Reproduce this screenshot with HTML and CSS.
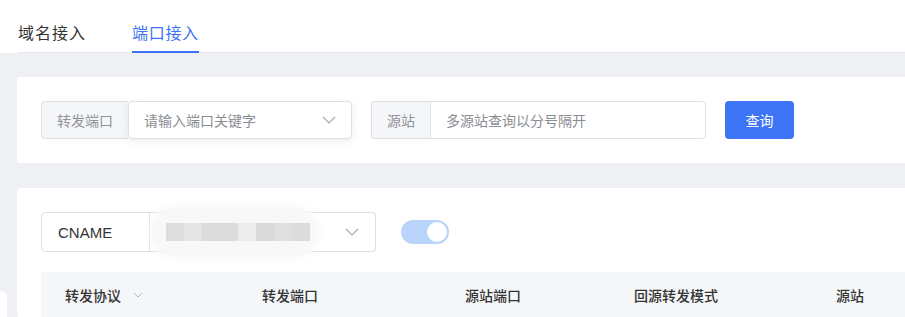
FILE: index.html
```html
<!doctype html>
<html lang="zh-CN">
  <head>
    <meta charset="UTF-8" />
    <title>端口接入</title>
    <link rel="stylesheet" href="styles.css">
  </head>
  <body>
    <div class="tabs">
      <span class="tab">域名接入</span>
      <span class="tab active">端口接入</span>
    </div>

    <div class="page">
      <div class="card search-card">
        <div class="group">
          <span class="addon addon-port">转发端口</span>
          <div class="select select-port">
            <span class="placeholder">请输入端口关键字</span>
            <svg class="arrow" width="14" height="8" viewBox="0 0 14 8"><path d="M1 1l6 6 6-6" fill="none" stroke="#a8abb2" stroke-width="1.2"/></svg>
          </div>
        </div>
        <div class="group group-origin">
          <span class="addon addon-origin">源站</span>
          <div class="input-origin">
            <span class="placeholder">多源站查询以分号隔开</span>
          </div>
        </div>
        <button class="btn">查询</button>
      </div>

      <div class="card list-card">
        <div class="toolbar">
          <div class="group group-cname">
            <span class="addon addon-cname">CNAME</span>
            <div class="select select-cname">
              <span class="blur">
                <i class="px p1"></i><i class="px p2"></i><i class="px p3"></i><i class="px p4"></i><i class="px p5"></i><i class="px p6"></i><i class="px p7"></i>
              </span>
              <svg class="arrow" width="14" height="8" viewBox="0 0 14 8"><path d="M1 1l6 6 6-6" fill="none" stroke="#a8abb2" stroke-width="1.2"/></svg>
            </div>
          </div>
          <span class="switch"><span class="knob"></span></span>
        </div>

        <div class="thead">
          <div class="th">转发协议
            <svg class="sort" width="10" height="6" viewBox="0 0 10 6"><path d="M1 1l4 4 4-4" fill="none" stroke="#b4b7bd" stroke-width="1"/></svg>
          </div>
          <div class="th">转发端口</div>
          <div class="th">源站端口</div>
          <div class="th">回源转发模式</div>
          <div class="th">源站</div>
        </div>
      </div>
    </div>

    <div class="side-tip"></div>
  </body>
</html>
```

FILE: styles.css
```css
body {
  margin: 0;
  font-family: "Noto Sans CJK SC", "Noto Sans", sans-serif;
  background: #eef0f4;
  color: #333;
  overflow: hidden;
  height: 317px;
}
.tabs {
  background: #fff;
  height: 53px;
  padding-left: 18px;
  display: flex;
  gap: 46px;
  position: relative;
}
.tabs::after {
  content: "";
  position: absolute;
  left: 18px;
  right: 0;
  bottom: 0;
  height: 1px;
  background: #e4e7ed;
}
.tab {
  font-size: 16px;
  line-height: 22px;
  padding-top: 21px;
  color: #333;
  height: 32px;
  box-sizing: border-box;
  letter-spacing: 1px;
}
.tab.active {
  color: #3d74f5;
  height: 53px;
  border-bottom: 2px solid #3d74f5;
  position: relative;
  z-index: 1;
  margin-bottom: -1px;
  letter-spacing: 0.7px;
}
.page {
  padding: 24px 0 0 17px;
}
.card {
  background: #fff;
  border-radius: 4px 0 0 4px;
  padding: 24px;
}
.search-card {
  display: flex;
  align-items: center;
  height: 38px;
  margin-bottom: 25px;
}
.group {
  display: flex;
  height: 38px;
  font-size: 14px;
}
.addon {
  background: #f5f6f8;
  color: #909399;
  border: 1px solid #dcdfe6;
  border-right: none;
  border-radius: 4px 0 0 4px;
  display: flex;
  align-items: center;
  justify-content: center;
  box-sizing: border-box;
}
.addon-port {
  width: 87px;
}
.addon-origin {
  width: 59px;
}
.select {
  display: flex;
  align-items: center;
  justify-content: space-between;
  border: 1px solid #dcdfe6;
  border-radius: 4px;
  box-sizing: border-box;
  background: #fff;
}
.select-port {
  width: 224px;
  padding: 0 15px;
  box-shadow: 0 2px 8px rgba(0, 0, 0, 0.08);
}
.placeholder {
  color: #8a8d93;
}
.group-origin {
  margin-left: 19px;
}
.input-origin {
  width: 276px;
  border: 1px solid #dcdfe6;
  border-radius: 0 4px 4px 0;
  box-sizing: border-box;
  display: flex;
  align-items: center;
  padding: 0 15px;
}
.btn {
  margin-left: 19px;
  width: 69px;
  height: 38px;
  border: none;
  border-radius: 4px;
  background: #3d74f5;
  color: #fff;
  font-family: inherit;
  font-size: 14px;
}
.list-card {
  padding-bottom: 0;
  padding-right: 0;
}
.toolbar {
  display: flex;
  align-items: center;
  gap: 25px;
  margin-bottom: 20px;
}
.group-cname {
  height: 40px;
}
.addon-cname {
  width: 109px;
  background: #fff;
  color: #333;
  justify-content: flex-start;
  padding-left: 16px;
  border-right: 1px solid #dcdfe6;
  font-family: "Liberation Sans", Arial, sans-serif;
  font-size: 15px;
}
.select-cname {
  width: 226px;
  border-left: none;
  border-radius: 0 4px 4px 0;
  padding: 0 16px 0 4px;
}
.blur {
  display: flex;
  align-items: center;
  padding: 14px 6px 14px 12px;
  margin: -6px 0;
  background: #f8f8f8;
  border-radius: 24px;
  box-shadow: 0 0 6px 4px #f8f8f8;
}
.px {
  display: block;
  width: 18px;
  height: 18px;
  background: #dedede;
}
.p1 { background: #dddddd; }
.p2 { background: #e5e5e5; }
.p3 { width: 36px; background: #dcdcdc; }
.p4 { background: #ececec; }
.p5 { background: #dadada; }
.p6 { background: #e0e0e0; }
.p7 { background: #dcdcdc; }
.switch {
  width: 48px;
  height: 24px;
  border-radius: 12px;
  background: #b8d4fb;
  display: flex;
  align-items: center;
  justify-content: flex-end;
  padding-right: 2px;
  box-sizing: border-box;
}
.knob {
  width: 20px;
  height: 20px;
  border-radius: 50%;
  background: #fff;
}
.thead {
  display: grid;
  grid-template-columns: 197px 203px 169px 202px 1fr;
  height: 45px;
  background: #f5f6f8;
  border-bottom: 1px solid #e4e7ed;
}
.th {
  display: flex;
  align-items: center;
  gap: 8px;
  padding-left: 24px;
  font-size: 14px;
  font-weight: 500;
  color: #333;
}
.sort {
  margin-left: 4px;
}
.side-tip {
  position: absolute;
  left: 0;
  top: 291px;
  width: 7px;
  height: 26px;
  background: #fff;
  border-radius: 0 6px 0 0;
}
```
